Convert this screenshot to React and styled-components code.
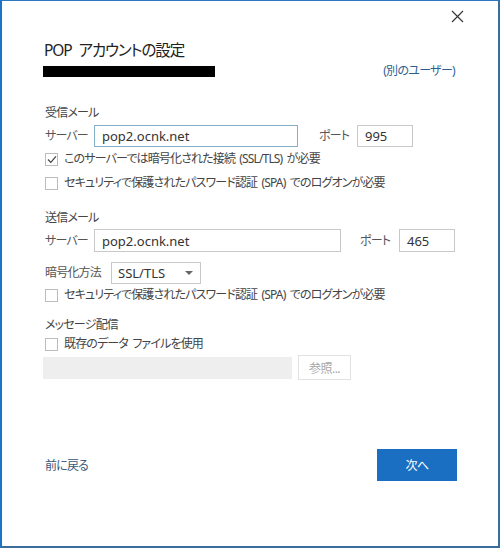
import React from "react";
import styled, { createGlobalStyle } from "styled-components";

const GlobalStyle = createGlobalStyle`
  html, body {
    margin: 0;
    padding: 0;
    background: #ffffff;
  }
  body {
    font-family: "Noto Sans", "Noto Sans CJK JP", sans-serif;
    font-feature-settings: "palt";
    color: #333;
  }
`;

const Dialog = styled.div`
  box-sizing: border-box;
  width: 500px;
  height: 548px;
  background: #fff;
  border-left: 2px solid #1b74c8;
  border-top: 1px solid #2a78c4;
  border-right: 2px solid #3a6d9e;
  border-bottom: 2px solid #3a6d9e;
  display: flex;
  flex-direction: column;
`;

const TopBar = styled.div`
  display: flex;
  justify-content: flex-end;
  padding: 9px 34px 0 0;
  height: 24px;
`;

const CloseButton = styled.button`
  border: none;
  background: none;
  padding: 0;
  width: 13px;
  height: 13px;
  cursor: pointer;
  display: flex;
`;

const Body = styled.div`
  flex: 1;
  display: flex;
  flex-direction: column;
  padding: 0 43px 0 41px;
`;

const Title = styled.h1`
  margin: 5px 0 0;
  font-size: 15.5px;
  line-height: 22px;
  letter-spacing: -1.1px;
  word-spacing: 4px;
  font-weight: 400;
  color: #222;
  padding-left: 1px;
`;

const AccountRow = styled.div`
  display: flex;
  justify-content: space-between;
  align-items: center;
  margin-top: 4px;
  height: 12px;
`;

const Redacted = styled.div`
  width: 172px;
  height: 11px;
  background: #000;
`;

const Link = styled.a`
  font-size: 12px;
  line-height: 12px;
  letter-spacing: -0.7px;
  color: #2e5f93;
  text-decoration: none;
  cursor: pointer;
  white-space: nowrap;
`;

const SectionLabel = styled.div`
  margin-top: ${(p) => p.$mt}px;
  font-size: 12px;
  line-height: 18px;
  letter-spacing: -0.8px;
  color: #444;
  padding-left: 2px;
`;

const Row = styled.div`
  display: flex;
  align-items: center;
  margin-top: ${(p) => p.$mt || 0}px;
`;

const FieldLabel = styled.label`
  box-sizing: border-box;
  font-size: 12px;
  line-height: 18px;
  letter-spacing: -0.8px;
  color: #555;
  width: ${(p) => p.$w}px;
  padding-left: ${(p) => p.$pl || 0}px;
  flex-shrink: 0;
  white-space: nowrap;
`;

const TextInput = styled.input`
  box-sizing: border-box;
  width: ${(p) => p.$w}px;
  height: ${(p) => p.$h || 22}px;
  border: 1px solid ${(p) => (p.$focus ? "#86adc8" : "#c9c9c9")};
  padding: 0 7px;
  font-family: inherit;
  font-size: 13px;
  color: #333;
  background: ${(p) => (p.disabled ? "#eeeeee" : "#fff")};
  outline: none;
  &:disabled {
    border-color: #eeeeee;
  }
`;

const Select = styled.div`
  box-sizing: border-box;
  width: 90px;
  height: 22px;
  border: 1px solid #c9c9c9;
  display: flex;
  align-items: center;
  justify-content: space-between;
  padding: 0 7px 0 6px;
  font-size: 13px;
  color: #333;
`;

const Arrow = styled.span`
  width: 0;
  height: 0;
  border-left: 4px solid transparent;
  border-right: 4px solid transparent;
  border-top: 4px solid #666;
`;

const CheckRow = styled.label`
  display: flex;
  align-items: center;
  margin-top: ${(p) => p.$mt}px;
  padding-left: 2px;
  font-size: 12px;
  line-height: 18px;
  letter-spacing: -0.85px;
  word-spacing: 2px;
  color: #444;
  height: 18px;
  white-space: nowrap;
`;

const Box = styled.span`
  box-sizing: border-box;
  width: 13px;
  height: 13px;
  border: 1px solid #bcbcbc;
  margin-right: 6px;
  display: flex;
  align-items: center;
  justify-content: center;
  flex-shrink: 0;
`;

const BrowseButton = styled.button`
  box-sizing: border-box;
  width: 53px;
  height: 25px;
  margin-left: 6px;
  border: 1px solid #e2e2e2;
  background: #fff;
  color: #a8a8a8;
  font-family: inherit;
  font-size: 12px;
  letter-spacing: -0.5px;
  padding: 0;
`;

const Footer = styled.div`
  display: flex;
  justify-content: space-between;
  align-items: center;
  margin-top: 69px;
  padding-left: 2px;
`;

const BackLink = styled.a`
  font-size: 12px;
  letter-spacing: -0.8px;
  color: #3a5878;
  cursor: pointer;
`;

const PrimaryButton = styled.button`
  width: 80px;
  height: 32px;
  border: none;
  background: #1a6fc2;
  color: #fff;
  font-family: inherit;
  font-size: 12px;
  letter-spacing: -0.5px;
  margin-right: -2px;
`;

function Check({ checked, children, mt }) {
  return (
    <CheckRow $mt={mt}>
      <Box>
        {checked && (
          <svg width="10" height="9" viewBox="0 0 10 9">
            <path d="M1 4.5 L3.8 7.3 L9 1.3" fill="none" stroke="#444" strokeWidth="1.2" />
          </svg>
        )}
      </Box>
      {children}
    </CheckRow>
  );
}

export default function App() {
  return (
    <>
      <GlobalStyle />
      <Dialog>
        <TopBar>
          <CloseButton aria-label="閉じる">
            <svg width="13" height="13" viewBox="0 0 13 13">
              <path d="M1 1 L12 12 M12 1 L1 12" stroke="#333" strokeWidth="1.1" />
            </svg>
          </CloseButton>
        </TopBar>
        <Body>
          <Title>POP アカウントの設定</Title>
          <AccountRow>
            <Redacted />
            <Link>(別のユーザー)</Link>
          </AccountRow>

          <SectionLabel $mt={27}>受信メール</SectionLabel>
          <Row $mt={3}>
            <FieldLabel $w={51} $pl={2}>サーバー</FieldLabel>
            <TextInput $w={204} $focus defaultValue="pop2.ocnk.net" />
            <FieldLabel $w={59} $pl={21}>ポート</FieldLabel>
            <TextInput $w={56} defaultValue="995" />
          </Row>
          <Check checked mt={3}>このサーバーでは暗号化された接続 (SSL/TLS) が必要</Check>
          <Check mt={6}>セキュリティで保護されたパスワード認証 (SPA) でのログオンが必要</Check>

          <SectionLabel $mt={17}>送信メール</SectionLabel>
          <Row $mt={2}>
            <FieldLabel $w={51} $pl={2}>サーバー</FieldLabel>
            <TextInput $w={252} $h={23} defaultValue="pop2.ocnk.net" />
            <FieldLabel $w={58} $pl={19}>ポート</FieldLabel>
            <TextInput $w={56} $h={23} defaultValue="465" />
          </Row>
          <Row $mt={10}>
            <FieldLabel $w={68} $pl={2}>暗号化方法</FieldLabel>
            <Select>
              SSL/TLS
              <Arrow />
            </Select>
          </Row>
          <Check mt={2}>セキュリティで保護されたパスワード認証 (SPA) でのログオンが必要</Check>

          <SectionLabel $mt={12}>メッセージ配信</SectionLabel>
          <Check mt={1}>既存のデータ ファイルを使用</Check>
          <Row $mt={2}>
            <TextInput $w={249} disabled />
            <BrowseButton disabled>参照...</BrowseButton>
          </Row>

          <Footer>
            <BackLink>前に戻る</BackLink>
            <PrimaryButton>次へ</PrimaryButton>
          </Footer>
        </Body>
      </Dialog>
    </>
  );
}
